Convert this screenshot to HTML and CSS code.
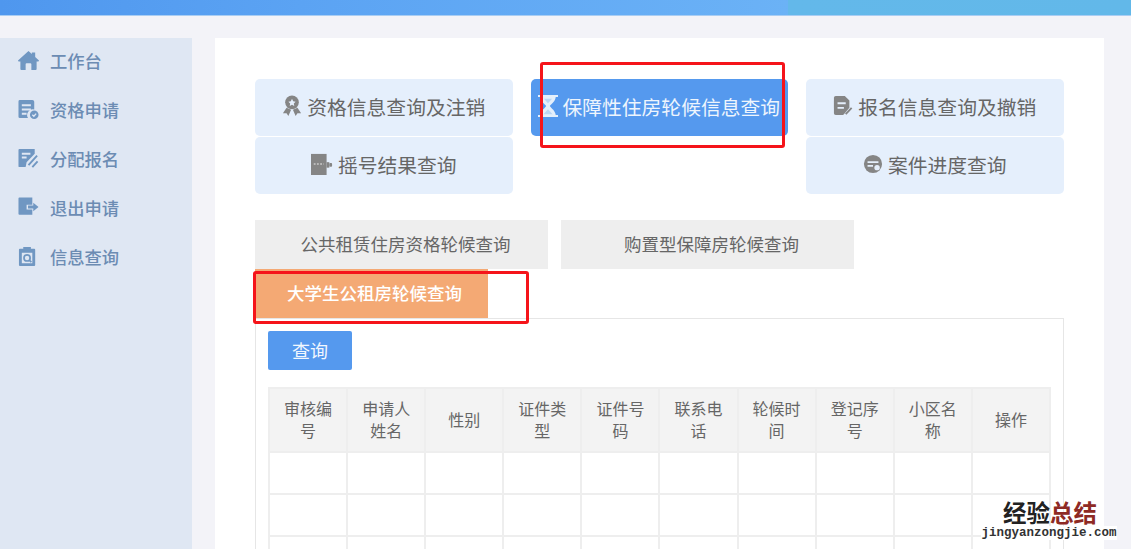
FILE: index.html
```html
<!DOCTYPE html>
<html lang="zh-CN">
<head>
<meta charset="utf-8">
<title>信息查询</title>
<link rel="stylesheet" href="styles.css">
</head>
<body>
<header class="topbar"></header>
<div class="layout">
  <nav class="sidebar">
    <a class="nav-item"><svg class="nav-icon" viewBox="0 0 22 22"><path d="M11 1 L14.5 4.2 L14.5 2.5 L18 2.5 L18 7.4 L22 11 Q22 12 21 12 L19.5 12 L19.5 20 Q19.5 21 18.5 21 L14 21 L14 15 Q14 14 13 14 L9 14 Q8 14 8 15 L8 21 L3.5 21 Q2.5 21 2.5 20 L2.5 12 L1 12 Q0 12 0 11 Z"/></svg><span>工作台</span></a>
    <a class="nav-item"><svg class="nav-icon" viewBox="0 0 22 22"><path d="M2 1 H15 Q17 1 17 3 V11 A6 6 0 0 0 10.5 20 H2 Q0.5 20 0.5 18.5 V2.5 Q0.5 1 2 1 Z"/><path class="cut" d="M4 6.5 H13.5 M4 11 H13.5 M4 15.5 H9"/><circle cx="17" cy="16.5" r="4.5"/><path class="cut thin" d="M15 16.5 L16.6 18 L19 15.3"/></svg><span>资格申请</span></a>
    <a class="nav-item"><svg class="nav-icon" viewBox="0 0 22 22"><path d="M1.5 1 H17.5 V6 L9 15 L8 20 H1.5 Q0.5 20 0.5 19 V2 Q0.5 1 1.5 1 Z"/><path class="cut" d="M4 6 H13 M4 10 H9"/><path class="stroke" d="M11 18 L20 8 M15 20 L20.5 14"/></svg><span>分配报名</span></a>
    <a class="nav-item"><svg class="nav-icon" viewBox="0 0 22 22"><path d="M1.5 0.5 H15 V8 H9 V13 H15 V18.5 H1.5 Q0.5 18.5 0.5 17.5 V1.5 Q0.5 0.5 1.5 0.5 Z"/><path d="M10.5 9 H16 V6 L21.5 10.5 L16 15 V12 H10.5 Z"/></svg><span>退出申请</span></a>
    <a class="nav-item"><svg class="nav-icon" viewBox="0 0 22 22"><path fill-rule="evenodd" d="M2 3 H5.5 V1 H13.5 V3 H17 Q18 3 18 4 V20 Q18 21 17 21 H2 Q1 21 1 20 V4 Q1 3 2 3 Z M4 7 V18 H15 V7 Z"/><circle cx="9.5" cy="12.5" r="3.2" class="ring"/><path class="stroke thin-line" d="M11.8 14.8 L14 17"/></svg><span>信息查询</span></a>
  </nav>
  <main class="panel">
    <div class="query-grid">
      <a class="query-btn"><svg class="btn-icon" viewBox="0 0 22 24"><circle cx="11" cy="8" r="7.5"/><path d="M5 14 L1 20 L5 20 L7 23 L10 16 Z M17 14 L21 20 L17 20 L15 23 L12 16 Z"/><path class="cut-fill" d="M11 4 L12.3 6.8 L15 7.2 L13 9.2 L13.5 12 L11 10.6 L8.5 12 L9 9.2 L7 7.2 L9.7 6.8 Z"/></svg>资格信息查询及注销</a>
      <a class="query-btn active"><svg class="btn-icon" viewBox="0 0 22 24"><path d="M0 0 H22 V2 H19.5 C19 7 15 9 13 12 C15 15 19 17 19.5 22 H22 V24 H0 V22 H2.5 C3 17 7 15 9 12 C7 9 3 7 2.5 2 H0 Z"/><path class="hour" d="M6 21 L11 15.5 L16 21 Z M6.5 4 H15.5 L11 9 Z"/></svg>保障性住房轮候信息查询</a>
      <a class="query-btn"><svg class="btn-icon" viewBox="0 0 22 24"><path fill-rule="evenodd" d="M3 1 H13 L18 6 V14 L12 21 L11 22 H3 Q1 22 1 20 V3 Q1 1 3 1 Z"/><path class="cut" d="M5 9 H14 M5 14 H12"/><path class="stroke" d="M14 21 L20.5 14"/></svg>报名信息查询及撤销</a>
      <a class="query-btn"><svg class="btn-icon wide" viewBox="0 0 24 24"><rect x="0" y="1" width="17" height="23"/><path class="dots" d="M3 12 H14"/><rect x="17" y="10" width="3" height="6"/><rect x="20" y="11" width="3" height="4" rx="1"/></svg>摇号结果查询</a>
      <a class="query-btn slot-3"><svg class="btn-icon" viewBox="0 0 22 22"><circle cx="11" cy="11" r="10"/><path class="cut" d="M5 9 H17 M5 13 H11"/><circle class="cut-fill" cx="15.5" cy="15" r="3"/></svg>案件进度查询</a>
    </div>
    <div class="tabs">
      <a class="tab">公共租赁住房资格轮候查询</a>
      <a class="tab">购置型保障房轮候查询</a>
      <a class="tab tab-active">大学生公租房轮候查询</a>
    </div>
    <section class="tab-body">
      <button class="search-btn" type="button">查询</button>
      <table class="result">
        <thead>
          <tr><th>审核编号</th><th>申请人姓名</th><th>性别</th><th>证件类型</th><th>证件号码</th><th>联系电话</th><th>轮候时间</th><th>登记序号</th><th>小区名称</th><th>操作</th></tr>
        </thead>
        <tbody>
          <tr><td></td><td></td><td></td><td></td><td></td><td></td><td></td><td></td><td></td><td></td></tr>
          <tr><td></td><td></td><td></td><td></td><td></td><td></td><td></td><td></td><td></td><td></td></tr>
          <tr><td></td><td></td><td></td><td></td><td></td><td></td><td></td><td></td><td></td><td></td></tr>
        </tbody>
      </table>
    </section>
  </main>
</div>
<div class="mark mark-a"></div>
<div class="mark mark-b"></div>
<div class="watermark">
  <div class="wm-cn">经验<em>总结</em></div>
  <div class="wm-en">jingyanzongjie.com</div>
</div>
</body>
</html>
```
FILE: styles.css
```css
* { box-sizing: border-box; }
html, body { margin: 0; height: 549px; overflow: hidden; }
body {
  background: #f3f3f8;
  font-family: "Noto Sans CJK SC", "Noto Sans", sans-serif;
  position: relative;
}
.topbar {
  height: 16px;
  background: linear-gradient(90deg, #4f97ee 0, #5ba3f3 300px, #6bb2f6 788px, #63b8ea 788px, #62b8e9 100%);
  border-bottom: 1px solid #a9cdf3;
}
.layout {
  display: flex;
  height: 533px;
  padding: 22px 27px 0 0;
  gap: 23px;
}
.sidebar {
  width: 192px;
  flex: none;
  background: #dfe7f3;
}
.nav-item {
  height: 46px;
  margin-bottom: 3px;
  padding: 0 0 2px 18px;
  display: flex;
  align-items: center;
  gap: 11px;
  color: #6c8cb3;
  font-size: 17.3px;
  font-weight: 500;
}
.nav-icon { width: 21px; height: 21px; fill: #7097c2; flex: none; }
.cut { fill: none; stroke: #dfe7f3; stroke-width: 2; }
.cut.thin { stroke-width: 1.4; }
.cut-fill { fill: #dfe7f3; }
.stroke { fill: none; stroke: #7097c2; stroke-width: 2; }
.ring { fill: none; stroke: #7097c2; stroke-width: 1.8; }
.thin-line { stroke-width: 1.8; }
.panel {
  flex: 1;
  background: #fff;
  padding: 41px 40px 0;
  overflow: hidden;
}
.query-grid {
  display: grid;
  grid-template-columns: repeat(3, 257.5px);
  grid-auto-rows: 57px;
  column-gap: 18px;
  row-gap: 1px;
}
.query-btn {
  display: flex;
  align-items: center;
  justify-content: center;
  gap: 5px;
  background: #e5effc;
  border-radius: 5px;
  padding-bottom: 3px;
  color: #666;
  font-size: 19.8px;
  white-space: nowrap;
}
.query-btn .btn-icon { width: 20px; height: 22px; fill: #858585; flex: none; }
.query-btn .btn-icon .cut { stroke: #e5effc; }
.query-btn .btn-icon .cut-fill { fill: #e5effc; }
.query-btn .btn-icon .stroke { stroke: #858585; }
.query-btn .btn-icon.wide { width: 22px; }
.dots { fill: none; stroke: #c9c9c9; stroke-width: 1.5; stroke-dasharray: 2 1.5; }
.query-btn.active { background: #5599ee; color: #eef5fd; gap: 4px; }
.query-btn.active .btn-icon { fill: #e4effb; }
.hour { fill: #b9d6f5; }
.slot-3 { grid-column: 3; }
.tabs {
  display: flex;
  flex-wrap: wrap;
  column-gap: 13px;
  margin-top: 26px;
  width: 808px;
}
.tab {
  width: 293px;
  height: 49px;
  padding: 0 0 3px 8px;
  background: #eeeeee;
  color: #666;
  font-size: 17.5px;
  display: flex;
  align-items: center;
  justify-content: center;
}
.tab-active {
  width: 233px;
  padding: 0 0 3px 6px;
  background: #f4a974;
  color: #fff;
  font-weight: 500;
}
.tab-body {
  border: 1px solid #e6e6e6;
  width: 809px;
  height: 300px;
  padding: 12px 12px 0;
}
.search-btn {
  display: block;
  width: 84px;
  height: 39px;
  border: 0;
  padding: 0 0 2px;
  border-radius: 2px;
  background: #5599ee;
  color: #f1f7fe;
  font-family: inherit;
  font-size: 18px;
}
.result {
  margin-top: 17px;
  width: 783px;
  table-layout: fixed;
  border-collapse: collapse;
}
.result th, .result td { border: 2px solid #eeeeee; padding: 0 12px; }
.result th {
  height: 64px;
  padding-bottom: 2px;
  background: #f3f3f3;
  color: #666;
  font-size: 16px;
  font-weight: 400;
  line-height: 22px;
}
.result td { height: 42px; }
.mark {
  position: absolute;
  border: 3px solid #f5141a;
  border-radius: 3px;
}
.mark-a { left: 540px; top: 62px; width: 245px; height: 86px; }
.mark-b { left: 253px; top: 271px; width: 276px; height: 53px; }
.watermark {
  position: absolute;
  left: 981px;
  top: 498px;
  width: 136px;
  text-align: center;
}
.wm-cn {
  font-size: 23.5px;
  font-weight: 700;
  line-height: 28px;
  color: #222;
  text-shadow: 0 0 2px #fff;
  padding-left: 2px;
}
.wm-cn em { font-style: normal; color: #8e2a24; }
.wm-en {
  font-family: "Liberation Mono", monospace;
  font-size: 12.5px;
  font-weight: 700;
  line-height: 14px;
  color: #333;
  background: #fff;
  white-space: nowrap;
}
```
